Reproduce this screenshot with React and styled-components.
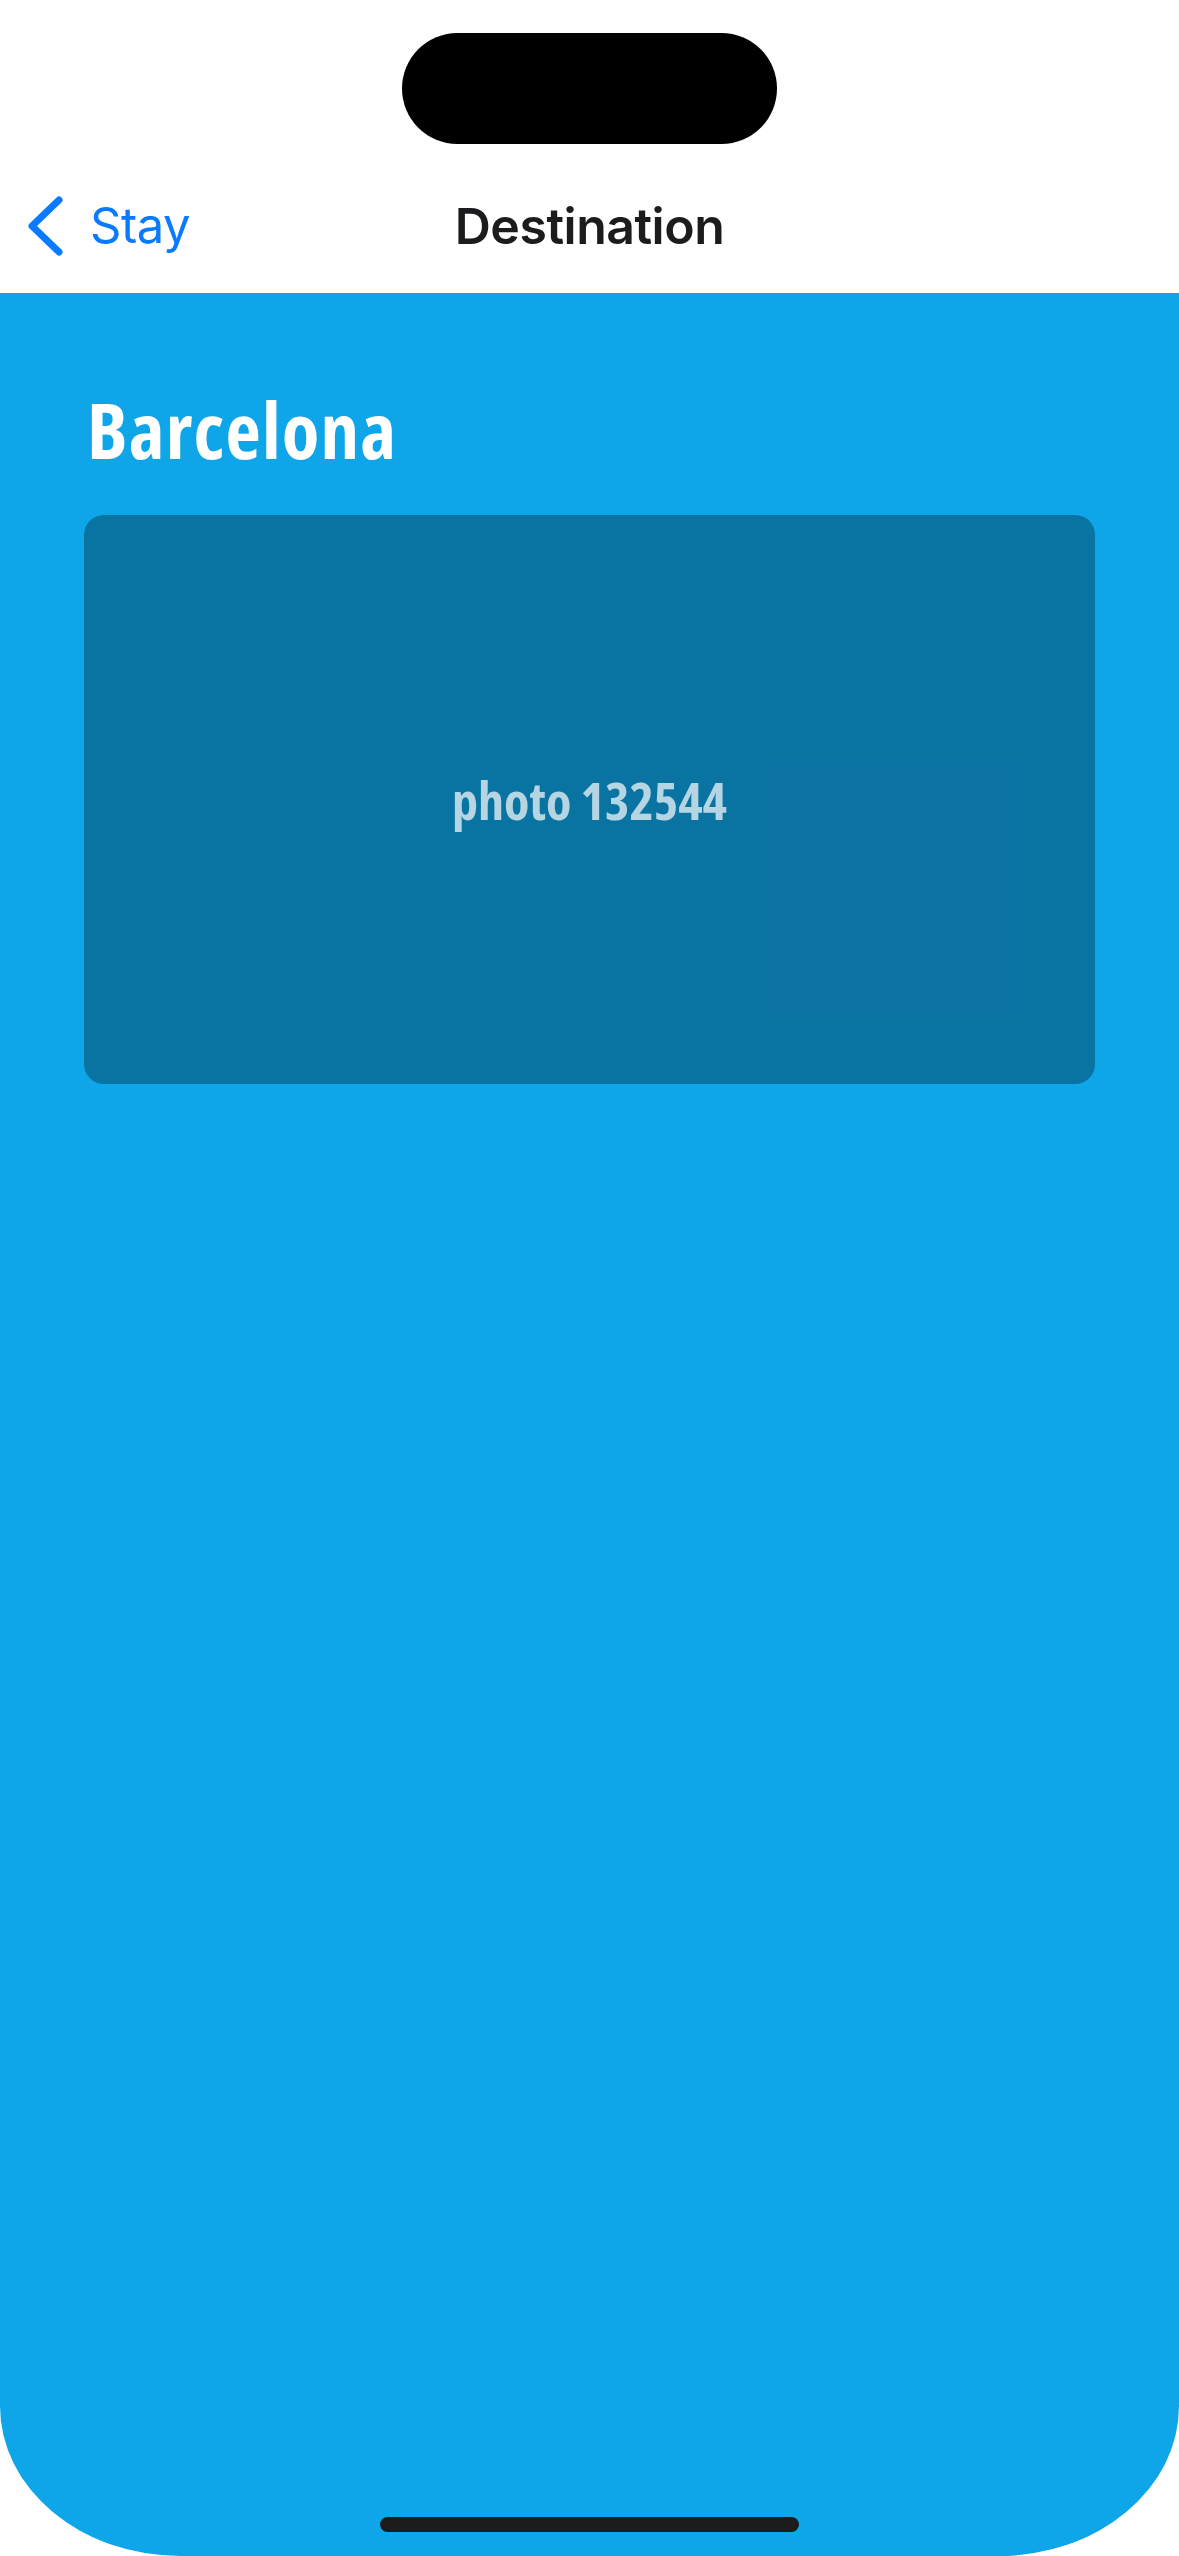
import styled, { createGlobalStyle } from "styled-components";

const GlobalStyle = createGlobalStyle`
  html, body {
    margin: 0;
    padding: 0;
    background: #ffffff;
  }
  * {
    box-sizing: border-box;
  }
`;

const App = () => {
  return (
    <Screen>
      <GlobalStyle />
      <Header>
        <IslandRow>
          <Island />
        </IslandRow>
        <NavBar>
          <BackButton>
            <svg width="40" height="64" viewBox="0 0 40 64">
              <path
                d="M33 6 L6 32 L33 58"
                fill="none"
                stroke="#0a7aff"
                strokeWidth="7"
                strokeLinecap="round"
                strokeLinejoin="round"
              />
            </svg>
            <BackLabel>Stay</BackLabel>
          </BackButton>
          <NavTitle>Destination</NavTitle>
          <span />
        </NavBar>
      </Header>
      <Body>
        <Title>Barcelona</Title>
        <Photo>
          <PhotoLabel>photo 132544</PhotoLabel>
        </Photo>
        <HomeIndicator />
      </Body>
    </Screen>
  );
};

const Screen = styled.div`
  width: 1179px;
  height: 2556px;
  display: flex;
  flex-direction: column;
  background: #ffffff;
  overflow: hidden;
`;

const Header = styled.header`
  display: flex;
  flex-direction: column;
  height: 293px;
  background: #ffffff;
`;

const IslandRow = styled.div`
  display: flex;
  justify-content: center;
  padding-top: 33px;
`;

const Island = styled.div`
  width: 375px;
  height: 111px;
  border-radius: 56px;
  background: #000000;
`;

const NavBar = styled.nav`
  flex: 1;
  display: grid;
  grid-template-columns: 1fr auto 1fr;
  align-items: center;
  padding: 14px 26px 0 26px;
`;

const BackButton = styled.div`
  display: flex;
  align-items: center;
  gap: 24px;
  color: #0a7aff;
`;

const BackLabel = styled.span`
  font-family: Inter, "Liberation Sans", sans-serif;
  font-size: 49px;
  font-weight: 400;
  letter-spacing: -0.5px;
`;

const NavTitle = styled.h1`
  margin: 0;
  font-family: Inter, "Liberation Sans", sans-serif;
  font-size: 50px;
  font-weight: 600;
  color: #1c1c1e;
  letter-spacing: -0.5px;
`;

const Body = styled.main`
  position: relative;
  flex: 1;
  display: flex;
  flex-direction: column;
  padding: 88px 84px 0;
  background: #0ea5e9;
  border-radius: 0 0 180px 180px / 0 0 150px 150px;
`;

const Title = styled.h2`
  margin: 0 0 36px 3px;
  font-family: "Open Sans", Roboto, sans-serif;
  font-stretch: 75%;
  font-size: 77px;
  font-weight: 700;
  line-height: 98px;
  letter-spacing: 1.2px;
  color: #ffffff;
`;

const Photo = styled.div`
  height: 569px;
  border-radius: 20px;
  background: rgba(0, 0, 0, 0.3);
  display: flex;
  align-items: center;
  justify-content: center;
`;

const PhotoLabel = styled.span`
  font-family: "Open Sans", Roboto, sans-serif;
  font-stretch: 75%;
  font-size: 52px;
  font-weight: 700;
  color: rgba(255, 255, 255, 0.7);
`;

const HomeIndicator = styled.div`
  position: absolute;
  left: 380px;
  bottom: 24px;
  width: 419px;
  height: 15px;
  border-radius: 8px;
  background: #1c1c1c;
`;

export default App;
